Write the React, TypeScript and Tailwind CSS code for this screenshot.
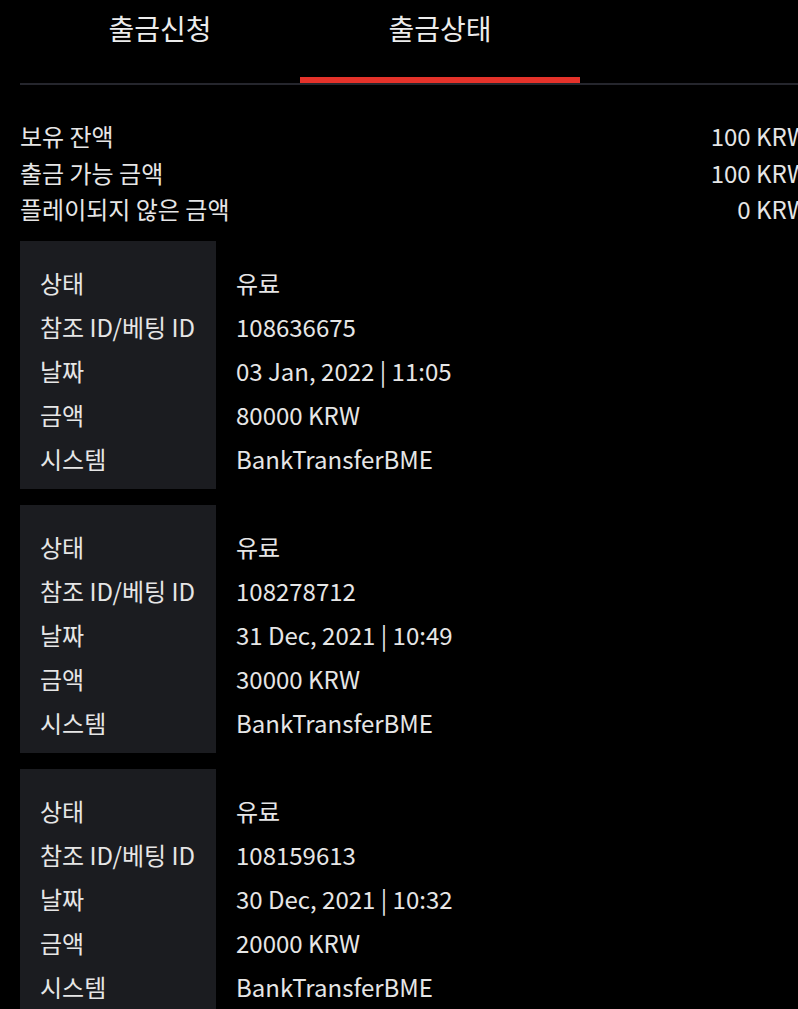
import React from "react";

const records = [
  { status: "유료", ref: "108636675", date: "03 Jan, 2022 | 11:05", amount: "80000 KRW", system: "BankTransferBME" },
  { status: "유료", ref: "108278712", date: "31 Dec, 2021 | 10:49", amount: "30000 KRW", system: "BankTransferBME" },
  { status: "유료", ref: "108159613", date: "30 Dec, 2021 | 10:32", amount: "20000 KRW", system: "BankTransferBME" },
];

const labels = ["상태", "참조 ID/베팅 ID", "날짜", "금액", "시스템"];

export default function App() {
  return (
    <div
      className="min-h-[1009px] w-[798px] overflow-hidden bg-black text-[#e6e6e6]"
      style={{ fontFamily: '"Noto Sans CJK KR", "Noto Sans", sans-serif' }}
    >
      <div className="ml-5 w-[788px] shrink-0">
        {/* Tabs */}
        <div className="flex border-b-2 border-[#25262d]">
          <div className="relative flex h-[83px] w-[280px] justify-center pt-[7px] text-[28px] leading-[42px] text-[#ececec]">
            출금신청
          </div>
          <div className="relative flex h-[83px] w-[280px] justify-center pt-[7px] text-[28px] leading-[42px] text-[#ececec]">
            출금상태
            <div className="absolute bottom-0 left-0 h-[6px] w-full bg-[#e5322a]" />
          </div>
        </div>

        {/* Balance */}
        <div className="mt-[33px] flex flex-col text-[24px]">
          <div className="flex h-[36.5px] items-center justify-between">
            <span>보유 잔액</span>
            <span>100 KRW</span>
          </div>
          <div className="flex h-[36.5px] items-center justify-between">
            <span>출금 가능 금액</span>
            <span>100 KRW</span>
          </div>
          <div className="flex h-[36.5px] items-center justify-between">
            <span>플레이되지 않은 금액</span>
            <span>0 KRW</span>
          </div>
        </div>

        {/* Records */}
        <div className="mt-[13px] flex flex-col gap-4">
          {records.map((r, i) => {
            const values = [r.status, r.ref, r.date, r.amount, r.system];
            return (
              <div key={i} className="flex text-[24px]">
                <div className="flex w-[196px] flex-col bg-[#1b1c20] pb-[8px] pl-5 pt-[20px]">
                  {labels.map((l) => (
                    <div key={l} className="flex h-[44px] items-center whitespace-nowrap">
                      {l}
                    </div>
                  ))}
                </div>
                <div className="flex flex-col pb-[8px] pl-5 pt-[20px]">
                  {values.map((v, j) => (
                    <div key={j} className="flex h-[44px] items-center whitespace-nowrap">
                      {v}
                    </div>
                  ))}
                </div>
              </div>
            );
          })}
        </div>
      </div>
    </div>
  );
}
